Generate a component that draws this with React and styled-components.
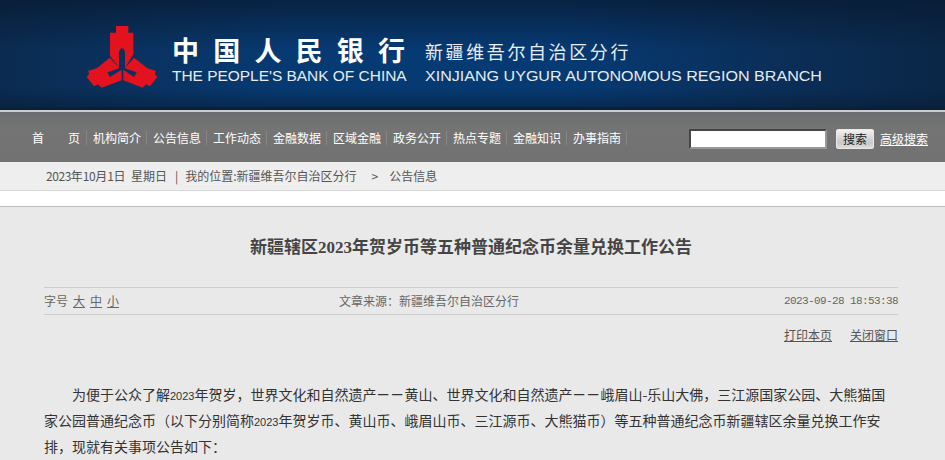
import styled, {createGlobalStyle} from 'styled-components';

const cjk = '"Noto Sans CJK SC", "Liberation Sans", sans-serif';
const navItems = ['机构简介', '公告信息', '工作动态', '金融数据', '区域金融', '政务公开', '热点专题', '金融知识', '办事指南'];

const GlobalStyle = createGlobalStyle`
  html, body {
    margin: 0;
    padding: 0;
    background: #e9e9e9;
    overflow: hidden;
  }
  body {
    font-family: "Liberation Sans", ${cjk};
    font-size: 12px;
  }
`;

const Banner = styled.header`
  box-sizing: border-box;
  height: 112px;
  padding: 25px 0 0 87px;
  display: flex;
  border-bottom: 2px solid #c9cdd0;
  box-shadow: inset 0 -3px 0 #0b2036;
  background:
    linear-gradient(180deg, rgba(8, 26, 50, 0.75) 0%, rgba(8, 26, 50, 0) 45%, rgba(8, 26, 50, 0) 80%, rgba(8, 26, 50, 0.55) 100%),
    linear-gradient(90deg, #0b2b50 0%, #073a72 30%, #063a73 60%, #0b2d55 85%, #0a2747 100%);
`;

const Logo = styled.svg`
  width: 71px;
  height: 63px;
  flex: none;
`;

const TitleGrid = styled.div`
  display: grid;
  grid-template-columns: 235px auto;
  column-gap: 18px;
  margin: 9px 0 0 14px;
  grid-template-rows: 32px auto;
  color: #fff;
  align-self: flex-start;
`;

const BankName = styled.div`
  font: 700 27px/32px ${cjk};
  letter-spacing: 14.2px;
  white-space: nowrap;
`;

const BranchName = styled.div`
  font: 400 18px/34px ${cjk};
  letter-spacing: 2.6px;
  white-space: nowrap;
  color: #e8edf2;
`;

const EnglishName = styled.div`
  font: 400 14.5px/18px "Liberation Sans", sans-serif;
  white-space: nowrap;
  color: #e6ebf0;
  margin-top: 1px;
  transform-origin: left center;
  transform: scaleX(${props => props.$scale});
`;

const NavBar = styled.nav`
  box-sizing: border-box;
  height: 50px;
  padding: 0 17px 0 32px;
  display: flex;
  align-items: center;
  justify-content: space-between;
  background: linear-gradient(180deg, #6a6c70 0%, #747474 30%, #727272 100%);
`;

const NavList = styled.div`
  display: flex;
  align-items: center;
  margin-top: 1px;
`;

const NavItem = styled.a`
  box-sizing: border-box;
  color: #fff;
  font: 12px/14px ${cjk};
  width: 60px;
  white-space: pre;
  padding-right: 5px;
  text-align: right;
  border-right: 1px solid #868686;

  &:first-child {
    width: 55px;
    text-align: left;
    padding-right: 0;
    letter-spacing: 24px;
  }
`;

const SearchBox = styled.form`
  display: flex;
  align-items: center;
  margin: 3px 0 0;
`;

const SearchInput = styled.input`
  box-sizing: border-box;
  width: 138px;
  height: 20px;
  margin: 0 9px 0 0;
  padding: 0;
  background: #fff;
  border: 2px solid;
  border-color: #444 #999 #999 #444;
`;

const SearchButton = styled.button`
  box-sizing: border-box;
  width: 38px;
  height: 20px;
  padding: 0;
  border: 1px solid #e8e8e8;
  border-radius: 2px;
  color: #222;
  font: 12px/18px ${cjk};
  background: linear-gradient(180deg, #f2f2f2 0%, #c8c8c8 70%, #dedede 100%);
`;

const AdvancedLink = styled.a`
  color: #fff;
  font: 12px/14px ${cjk};
  text-decoration: underline;
  margin-left: 6px;
`;

const Crumbs = styled.div`
  box-sizing: border-box;
  height: 29px;
  padding: 0 0 0 46px;
  display: flex;
  align-items: center;
  color: #555;
  font: 12px/14px ${cjk};
  white-space: pre;
  background: #eeeeee;
  border-bottom: 1px solid #d6d6d6;
`;

const Crumb = styled.span`
  margin-left: ${props => props.$gap || 0}px;
`;

const CrumbDigits = styled.span`
  letter-spacing: -0.45px;
`;

const WhiteBand = styled.div`
  height: 15px;
  background: #fff;
  border-bottom: 1px solid #bdbdbd;
`;

const Article = styled.main`
  padding: 0 47px 0 44px;
  background: #e9e9e9;
`;

const Title = styled.h1`
  margin: 0;
  padding: 31px 0 0;
  height: 49px;
  box-sizing: content-box;
  text-align: center;
  color: #444;
  font: 700 17px/20px "Liberation Serif", ${cjk};
`;

const MetaRow = styled.div`
  box-sizing: border-box;
  height: 28px;
  display: grid;
  grid-template-columns: 295px auto 1fr;
  align-items: center;
  color: #666;
  font: 12px/14px ${cjk};
  border-top: 1px solid #cdcdcd;
  border-bottom: 1px solid #cdcdcd;
`;

const FontSizes = styled.div`
  display: flex;
  gap: 5px;
`;

const SizeLink = styled.a`
  text-decoration: underline;
  &:first-child {
    text-decoration: none;
  }
`;

const Stamp = styled.div`
  text-align: right;
  font: 11px/14px "Liberation Mono", monospace;
  letter-spacing: -0.6px;
`;

const Tools = styled.div`
  display: flex;
  justify-content: flex-end;
  gap: 18px;
  padding-top: 13px;
  height: 43px;
  box-sizing: border-box;
`;

const ToolLink = styled.a`
  color: #555;
  font: 12px/14px ${cjk};
  text-decoration: underline;
`;

const Body = styled.p`
  margin: 0;
  padding-top: 23px;
  text-indent: 28px;
  color: #333;
  font: 14px/26px ${cjk};
`;

const Digits = styled.span`
  font: 11px/1 "Liberation Sans", sans-serif;
`;

const Dash = styled.span`
  display: inline-block;
  line-height: 1;
  text-indent: 0;
  transform: scaleX(0.8);
`;

export default function App() {
    return (
        <>
            <GlobalStyle />
            <Banner>
                <Logo viewBox="51 30 213 189">
                    <g fill="#e2121f">
                        <path d="M138 33H175V53H190V118L165 158V110Q156 88 147 110V158L120 122V53H138Z" />
                        <path d="M120 128L148 160L112 172L120 186L155 164V196L95 218L84 208L72 214L50 186L58 176L54 168L80 160Z" />
                        <path d="M192 128L164 160L200 172L192 186L160 164V196L218 218L228 208L240 214L262 186L254 176L258 168L232 160Z" />
                    </g>
                </Logo>
                <TitleGrid>
                    <BankName>中国人民银行</BankName>
                    <BranchName>新疆维吾尔自治区分行</BranchName>
                    <EnglishName $scale={1.065}>THE PEOPLE'S BANK OF CHINA</EnglishName>
                    <EnglishName $scale={1.108}>XINJIANG UYGUR AUTONOMOUS REGION BRANCH</EnglishName>
                </TitleGrid>
            </Banner>
            <NavBar>
                <NavList>
                    <NavItem>首页</NavItem>
                    {navItems.map(item => <NavItem key={item}>{item}</NavItem>)}
                </NavList>
                <SearchBox>
                    <SearchInput />
                    <SearchButton type="button">搜索</SearchButton>
                    <AdvancedLink>高级搜索</AdvancedLink>
                </SearchBox>
            </NavBar>
            <Crumbs>
                <Crumb><CrumbDigits>2023</CrumbDigits>年<CrumbDigits>10</CrumbDigits>月<CrumbDigits>1</CrumbDigits>日  星期日</Crumb>
                <Crumb $gap={8}>|</Crumb>
                <Crumb $gap={7}>我的位置:新疆维吾尔自治区分行</Crumb>
                <Crumb $gap={15}>&gt;</Crumb>
                <Crumb $gap={11}>公告信息</Crumb>
            </Crumbs>
            <WhiteBand />
            <Article>
                <Title>新疆辖区2023年贺岁币等五种普通纪念币余量兑换工作公告</Title>
                <MetaRow>
                    <FontSizes>
                        <SizeLink>字号</SizeLink>
                        <SizeLink>大</SizeLink>
                        <SizeLink>中</SizeLink>
                        <SizeLink>小</SizeLink>
                    </FontSizes>
                    <div>文章来源：新疆维吾尔自治区分行</div>
                    <Stamp>2023-09-28 18:53:38</Stamp>
                </MetaRow>
                <Tools>
                    <ToolLink>打印本页</ToolLink>
                    <ToolLink>关闭窗口</ToolLink>
                </Tools>
                <Body>
                    为便于公众了解<Digits>2023</Digits>年贺岁，世界文化和自然遗产<Dash>一</Dash><Dash>一</Dash>黄山、世界文化和自然遗产<Dash>一</Dash><Dash>一</Dash>峨眉山-乐山大佛，三江源国家公园、大熊猫国家公园普通纪念币（以下分别简称<Digits>2023</Digits>年贺岁币、黄山币、峨眉山币、三江源币、大熊猫币）等五种普通纪念币新疆辖区余量兑换工作安排，现就有关事项公告如下：
                </Body>
            </Article>
        </>
    );
}
